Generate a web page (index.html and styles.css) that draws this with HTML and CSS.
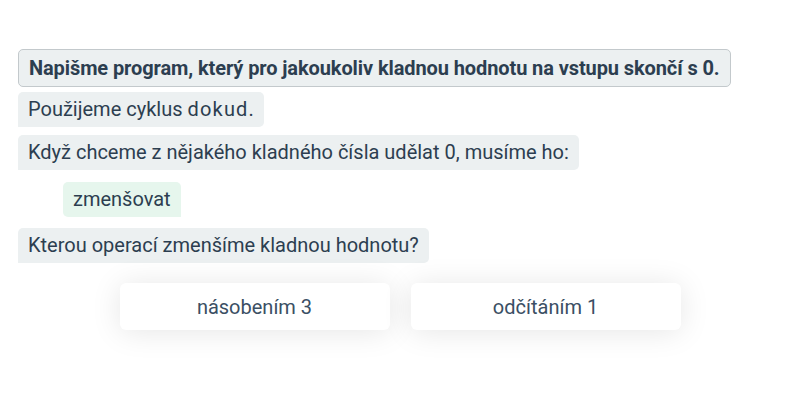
FILE: index.html
```html
<!DOCTYPE html>
<html lang="cs">
<head>
  <meta charset="UTF-8" />
  <title>Cyklus dokud</title>
  <link rel="stylesheet" href="styles.css">
</head>
<body>
  <div class="chat">
    <div class="msg task">Napišme program, který pro jakoukoliv kladnou hodnotu na vstupu skončí s 0.</div>
    <div class="msg">Použijeme cyklus <span class="kw">dokud</span>.</div>
    <div class="msg">Když chceme z nějakého kladného čísla udělat 0, musíme ho:</div>
    <div class="msg answer">zmenšovat</div>
    <div class="msg">Kterou operací zmenšíme kladnou hodnotu?</div>
  </div>
  <div class="choices">
    <button class="choice">násobením 3</button>
    <button class="choice">odčítáním 1</button>
  </div>
</body>
</html>
```

FILE: styles.css
```css
html, body {
  min-height: 100%;
}
body {
  margin: 0;
  padding-bottom: 70px;
  font-family: Roboto, 'Noto Sans', sans-serif;
  font-size: 20px;
  color: #2c3e50;
  background-color: #fff;
}
.chat {
  display: flex;
  flex-direction: column;
  align-items: flex-start;
  padding: 49px 18px 0;
}
.msg {
  background-color: #ecf0f1;
  padding: 5px 10px;
  line-height: 25px;
  border-radius: 5px 5px 5px 0;
  margin-bottom: 8px;
}
.task {
  font-weight: bold;
  letter-spacing: -0.1px;
  padding: 6px 10px 5px;
  border: 1px solid #c3c9cc;
  border-radius: 5px;
  margin-bottom: 5px;
}
.kw {
  letter-spacing: 0.06em;
}
.answer {
  background-color: #e6f6ed;
  margin: 4px 0 11px 45px;
  border-radius: 5px 5px 0 5px;
}
.choices {
  display: flex;
  justify-content: center;
  gap: 21px;
  margin-top: 12px;
}
.choice {
  width: 270px;
  height: 47px;
  border: none;
  border-radius: 6px;
  background-color: #fff;
  color: #3b4f64;
  font-family: Roboto, 'Noto Sans', sans-serif;
  font-size: 20px;
  box-shadow: 0 2px 30px rgba(0, 0, 0, 0.1);
  cursor: pointer;
}
```
